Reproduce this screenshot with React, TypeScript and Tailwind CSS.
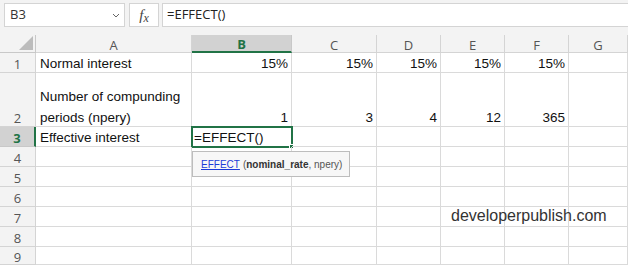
import React from 'react'

const cols = ['A', 'B', 'C', 'D', 'E', 'F', 'G']
const colWidths = ['w-[156px]', 'w-[100px]', 'w-[85px]', 'w-[64px]', 'w-[64px]', 'w-[64px]', 'w-[59px]']

// rows: label, height class, cell values (A..G)
const rows: { n: number; h: string; cells: string[] }[] = [
  { n: 1, h: 'h-[20px]', cells: ['Normal interest', '15%', '15%', '15%', '15%', '15%', ''] },
  { n: 2, h: 'h-[54px]', cells: ['', '1', '3', '4', '12', '365', ''] },
  { n: 3, h: 'h-[20px]', cells: ['Effective interest', '', '', '', '', '', ''] },
  { n: 4, h: 'h-[20px]', cells: ['', '', '', '', '', '', ''] },
  { n: 5, h: 'h-[20px]', cells: ['', '', '', '', '', '', ''] },
  { n: 6, h: 'h-[20px]', cells: ['', '', '', '', '', '', ''] },
  { n: 7, h: 'h-[20px]', cells: ['', '', '', '', '', '', ''] },
  { n: 8, h: 'h-[20px]', cells: ['', '', '', '', '', '', ''] },
  { n: 9, h: 'h-[18px]', cells: ['', '', '', '', '', '', ''] },
]

const cellFont = { fontFamily: '"Liberation Sans", Arial, sans-serif' }
const uiFont = { fontFamily: '"Open Sans", "Noto Sans", sans-serif' }

function FormulaBar() {
  return (
    <div className="h-[35px] bg-[#f3f3f3] flex items-start pt-[3px] pl-[4px]">
      <div className="w-[121px] h-[24px] bg-white border border-[#d4d4d4] flex items-center justify-between pl-[5px] pr-[4px]">
        <span className="text-[13px] text-[#333]" style={uiFont}>B3</span>
        <svg width="8" height="5" viewBox="0 0 8 5">
          <path d="M1 1 L4 4 L7 1" fill="none" stroke="#666" strokeWidth="1" />
        </svg>
      </div>
      <div className="ml-[4px] w-[30px] h-[24px] bg-white border border-[#d4d4d4] flex items-center justify-center">
        <span className="italic text-[15px] text-[#444] leading-none" style={{ fontFamily: '"Liberation Serif", serif' }}>
          f<span className="text-[12px] relative top-[2px]">x</span>
        </span>
      </div>
      <div className="ml-[3px] flex-1 h-[24px] bg-white border-y border-l border-[#d4d4d4] flex items-center pl-[4px]">
        <span className="text-[13px] text-[#222]" style={uiFont}>=EFFECT()</span>
      </div>
    </div>
  )
}

function HeaderRow() {
  return (
    <div className="flex h-[18px]">
      <div className="w-[36px] h-full bg-[#f3f3f3] border-r border-b border-[#c8c8c8] flex items-end justify-end pr-[2px] pb-[2px]">
        <svg width="14" height="14" viewBox="0 0 14 14">
          <polygon points="14,0 14,14 0,14" fill="#bcbcbc" />
        </svg>
      </div>
      {cols.map((c, i) => {
        const sel = c === 'B'
        return (
          <div
            key={c}
            className={`${colWidths[i]} h-full flex items-center justify-center pt-[2px] text-[13px] leading-[14px] ${
              sel
                ? 'bg-[#d2d2d2] border-b-2 border-b-[#217346] border-r border-r-[#c8c8c8] text-[#217346] font-bold'
                : 'bg-[#f3f3f3] border-r border-b border-[#d4d4d4] text-[#555]'
            }`}
            style={uiFont}
          >
            {c}
          </div>
        )
      })}
    </div>
  )
}

function Row({ n, h, cells }: { n: number; h: string; cells: string[] }) {
  const sel = n === 3
  const pad = n === 9 ? 'pb-0' : 'pb-[1px]'
  return (
    <div className={`flex ${h}`}>
      <div
        className={`w-[36px] h-full flex items-end justify-center ${pad} text-[13px] leading-[14px] ${
          sel
            ? 'bg-[#d2d2d2] border-r-2 border-r-[#217346] border-b border-b-[#c8c8c8] text-[#217346] font-bold'
            : 'bg-[#f3f3f3] border-r border-b border-[#d4d4d4] text-[#555]'
        }`}
        style={uiFont}
      >
        {n}
      </div>
      {cells.map((v, i) => {
        const isA = i === 0
        return (
          <div
            key={i}
            className={`${colWidths[i]} h-full relative border-r border-b border-[#dadada] flex items-end pb-[1px] text-[13.5px] text-[#111] leading-[14px] ${
              isA ? 'justify-start pl-[4px]' : 'justify-end pr-[3px]'
            }`}
            style={cellFont}
          >
            {n === 2 && isA ? (
              <div className="flex flex-col gap-[7px]">
                <span>Number of compunding</span>
                <span>periods (npery)</span>
              </div>
            ) : (
              v
            )}
            {n === 3 && i === 1 && (
              <>
                <div className="absolute -left-[1px] -top-[1px] w-[102px] h-[22px] border-2 border-[#217346] flex items-end pb-[1px] pl-[1px] text-[#111]">
                  <span>=EFFECT()</span>
                </div>
                <div className="absolute -right-[3px] -bottom-[3px] w-[5px] h-[5px] bg-[#217346] border border-white" />
              </>
            )}
          </div>
        )
      })}
    </div>
  )
}

export default function App() {
  return (
    <div className="w-[628px] h-[265px] overflow-hidden relative bg-white">
      <FormulaBar />
      <HeaderRow />
      {rows.map(r => (
        <Row key={r.n} {...r} />
      ))}

      {/* function argument tooltip */}
      <div
        className="absolute left-[192px] top-[151px] w-[158px] h-[26px] bg-[#f7f7f7] border border-[#bdbdbd] flex items-center pl-[8px] text-[10px] text-[#555] whitespace-nowrap"
        style={cellFont}
      >
        <span className="text-[#1c3bd8] underline">EFFECT</span>
        <span className="ml-[3px]">(</span>
        <span className="font-bold text-[#333]">nominal_rate</span>
        <span>, npery)</span>
      </div>

      {/* watermark */}
      <div
        className="absolute left-[451px] top-[208px] text-[16px] text-[#333] leading-none"
        style={{ fontFamily: '"Liberation Sans", Arial, sans-serif' }}
      >
        developerpublish.com
      </div>
    </div>
  )
}
